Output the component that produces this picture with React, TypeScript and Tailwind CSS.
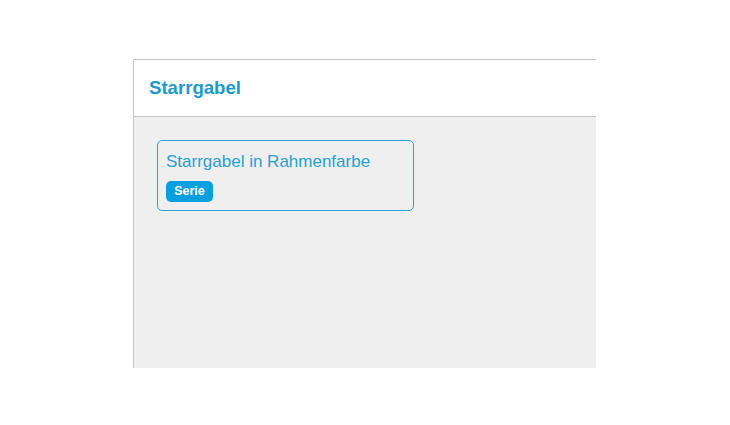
export default function App() {
  return (
    <div className="w-[730px] h-[425px] bg-white pt-[59px] pl-[133px]" style={{ fontFamily: '"Liberation Sans", Arial, sans-serif' }}>
      <div className="w-[463px] h-[309px] border-l border-t border-[#c6c6c6] flex flex-col">
        <div className="h-[57px] bg-white border-b border-[#c6c6c6] flex items-center pl-[15px]">
          <h1 className="text-[18.6px] font-bold text-[#1b9acb] leading-none">Starrgabel</h1>
        </div>
        <div className="flex-1 bg-[#efefef] pt-[23px] pl-[23px]">
          <div className="w-[257px] h-[71px] border border-[#2ea3d3] rounded-[5px] pl-[8px] pt-[11px]">
            <div className="text-[17px] text-[#2a9fd0] leading-[19px]">Starrgabel in Rahmenfarbe</div>
            <div className="mt-[10px] inline-flex items-center justify-center w-[47px] h-[21px] rounded-[5px] bg-[#0aa0e0] text-white text-[12.5px] font-bold">Serie</div>
          </div>
        </div>
      </div>
    </div>
  );
}
